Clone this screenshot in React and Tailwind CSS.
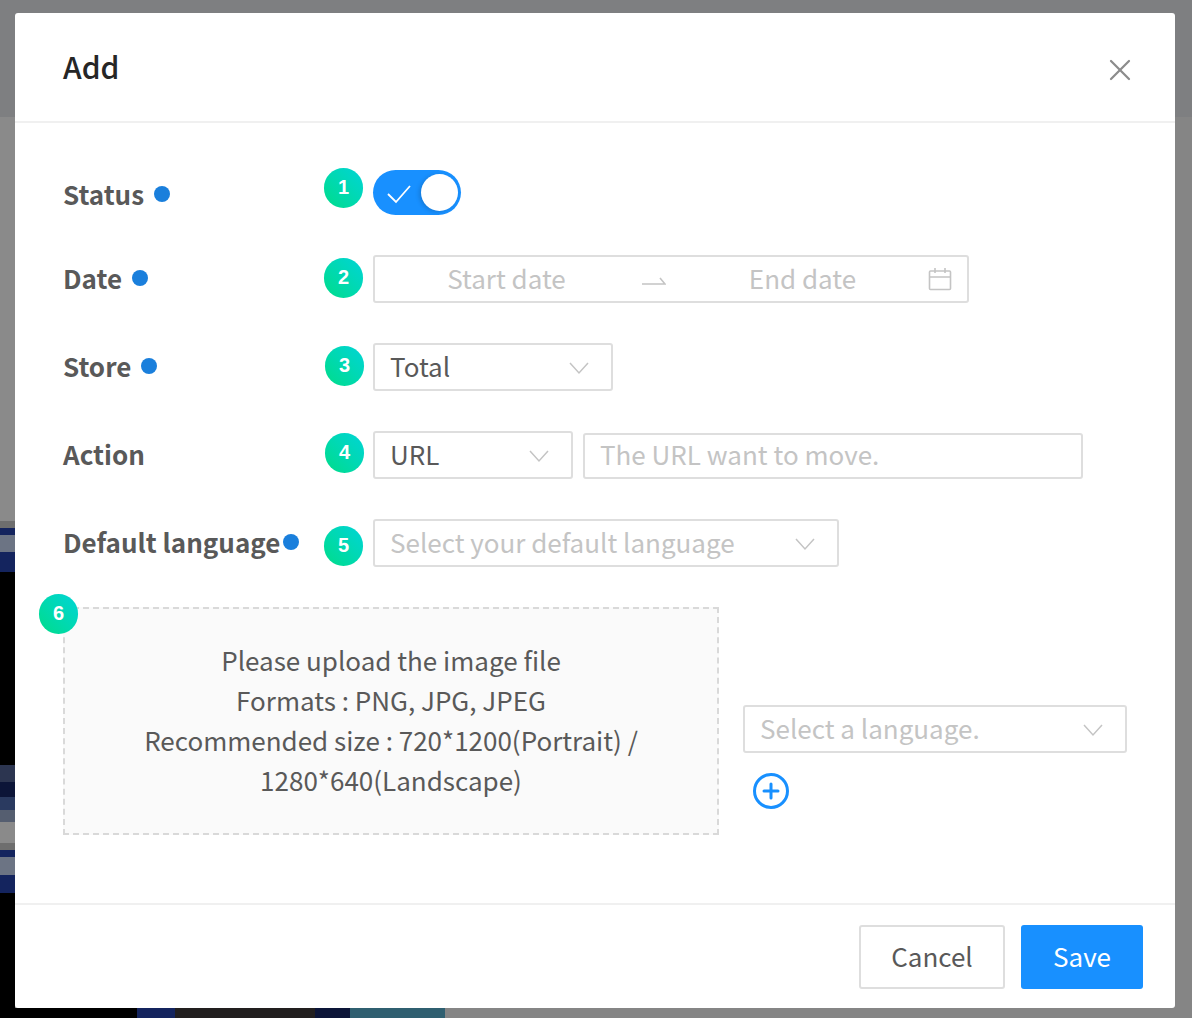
import React from 'react';
import { X, Plus } from 'lucide-react';

const Badge = ({ n, className }) => (
  <span className={`absolute flex h-10 w-[39px] items-center justify-center rounded-full bg-gradient-to-tr from-[#00dc88] to-[#00d4d6] pb-[2px] text-[20px] font-bold text-white font-['Liberation_Sans',sans-serif] ${className}`}>
    {n}
  </span>
);

const Chevron = () => (
  <svg width="20" height="14" viewBox="0 0 20 14" fill="none" stroke="#c4c4c4" strokeWidth="1.5" className="mt-[2px]">
    <path d="M1 2l9 10 9-10" />
  </svg>
);

const Select = ({ value, placeholder, className }) => (
  <div className={`flex h-12 items-center justify-between rounded-[3px] border-2 border-[#dedede] bg-white pl-[15px] pr-[22px] text-[26px] ${className}`}>
    <span className={`pb-1 ${value ? 'text-[#595959]' : 'text-[#c4c4c4]'}`}>{value || placeholder}</span>
    <Chevron />
  </div>
);

const Row = ({ label, dot, badge, badgeClass, className, labelClass = 'pb-1', children }) => (
  <div className={`relative flex items-center ${className}`}>
    <div className={`flex w-[310px] shrink-0 items-center text-[26px] font-bold text-[#595959] ${labelClass}`}>
      {label}
      {dot && <span className={`mt-[1px] h-4 w-4 rounded-full bg-[#1a7fdc] ${dot}`} />}
    </div>
    <Badge n={badge} className={badgeClass} />
    {children}
  </div>
);

export default function App() {
  return (
    <div className="relative h-[1018px] w-[1192px] overflow-hidden bg-[#858585] pl-[15px] pt-[13px] font-['Noto_Sans_CJK_KR','Noto_Sans',sans-serif]">
      {/* page behind the overlay */}
      <div className="absolute inset-0">
        <div className="h-[117px] bg-[#7e7f81]" />
        <div className="flex w-[15px] flex-col">
          <div className="h-[404px] bg-[#8a8a8a]" />
          <div className="h-[7px] bg-[#6e6e6e]" />
          <div className="h-[7px] bg-[#14245e]" />
          <div className="h-[17px] bg-[#6c7484]" />
          <div className="h-[20px] bg-[#14245e]" />
          <div className="h-[193px] bg-black" />
          <div className="h-[17px] bg-[#2c3550]" />
          <div className="h-[15px] bg-[#0c1538]" />
          <div className="h-[13px] bg-[#2a3a60]" />
          <div className="h-[12px] bg-[#555e70]" />
          <div className="h-[21px] bg-[#8a8a8a]" />
          <div className="h-[7px] bg-[#6e6e6e]" />
          <div className="h-[7px] bg-[#14245e]" />
          <div className="h-[18px] bg-[#6c7484]" />
          <div className="h-[18px] bg-[#14245e]" />
          <div className="h-[125px] bg-black" />
        </div>
      </div>
      <div className="absolute bottom-0 left-0 flex h-[10px]">
        <div className="w-[137px] bg-black" />
        <div className="w-[38px] bg-[#14245e]" />
        <div className="w-[140px] bg-[#221f1f]" />
        <div className="w-[35px] bg-[#0c1538]" />
        <div className="w-[95px] bg-[#2f5f70]" />
      </div>

      <div className="relative flex h-[995px] w-[1160px] flex-col rounded-[3px] bg-white">
        <div className="flex h-[110px] shrink-0 items-center justify-between border-b-2 border-[#f0f0f0] pl-[48px] pr-[37px]">
          <h1 className="mb-[1px] text-[30px] font-medium text-[#262626]">Add</h1>
          <X size={36} strokeWidth={1.5} className="mt-[6px] text-[#8c8c8c]" />
        </div>

        <div className="flex flex-1 flex-col pl-[48px] pt-[48px]">
          <Row label="Status" dot="ml-[10px]" labelClass="" badge="1" badgeClass="left-[261px] top-[-3px]" className="h-[44px]">
            <div className="relative mt-[-1px] h-[45px] w-[88px] rounded-full bg-[#1890ff]">
              <svg width="24" height="20" viewBox="0 0 24 20" fill="none" stroke="white" strokeWidth="1.8" className="absolute left-[14px] top-[14px]">
                <path d="M1 10l8 8L23 2" />
              </svg>
              <span className="absolute right-[3px] top-[4px] h-[37px] w-[37px] rounded-full bg-white shadow-[-2px_1px_4px_rgba(0,0,0,0.15)]" />
            </div>
          </Row>

          <Row label="Date" dot="ml-[10px]" badge="2" badgeClass="left-[261px] top-[3px]" className="mt-[40px]">
            <div className="flex h-12 w-[596px] items-center rounded-[3px] border-2 border-[#dedede] bg-white pr-[15px] text-[26px] text-[#c4c4c4]">
              <span className="w-[263px] shrink-0 pb-1 text-center">Start date</span>
              <svg width="24" height="14" viewBox="0 0 24 14" fill="none" stroke="#c4c4c4" strokeWidth="1.6" className="ml-[4px] mt-[3px] shrink-0">
                <path d="M0 10h23l-5-6" />
              </svg>
              <span className="ml-[26px] w-[221px] shrink-0 pb-1 text-center">End date</span>
              <svg width="24" height="24" viewBox="0 0 24 24" fill="none" stroke="#c4c4c4" strokeWidth="1.6" className="ml-auto shrink-0">
                <rect x="1.5" y="4" width="21" height="18.5" rx="1" />
                <path d="M1.5 10h21M7 1v5M17 1v5" />
              </svg>
            </div>
          </Row>

          <Row label="Store" dot="ml-[10px]" badge="3" badgeClass="left-[262px] top-[3px]" className="mt-[40px]">
            <Select value="Total" className="w-[240px]" />
          </Row>

          <Row label="Action" badge="4" badgeClass="left-[262px] top-[2px]" className="mt-[40px]">
            <Select value="URL" className="w-[200px]" />
            <div className="ml-[10px] mt-[1px] flex h-[46px] w-[500px] items-center rounded-[3px] border-2 border-[#dedede] bg-white pb-1 pl-[15px] text-[26px] text-[#c4c4c4]">
              The URL want to move.
            </div>
          </Row>

          <Row label="Default language" dot="ml-[3px]" badge="5" badgeClass="left-[261px] top-[7px]" className="mt-[40px]">
            <Select placeholder="Select your default language" className="w-[466px]" />
          </Row>

          <div className="relative mt-[40px] flex items-start">
            <Badge n="6" className="left-[-24px] top-[-13px]" />
            <div className="flex h-[228px] w-[656px] flex-col items-center justify-center border-2 border-dashed border-[#d9d9d9] bg-[#fafafa] pb-[2px] text-center text-[26px] leading-[40px] text-[#595959]">
              <p>Please upload the image file</p>
              <p>Formats : PNG, JPG, JPEG</p>
              <p>Recommended size : 720*1200(Portrait) /</p>
              <p>1280*640(Landscape)</p>
            </div>
            <div className="ml-[24px] mt-[98px] flex flex-col items-start">
              <Select placeholder="Select a language." className="w-[384px]" />
              <div className="ml-[10px] mt-[20px] flex h-9 w-9 items-center justify-center rounded-full border-[3px] border-[#1890ff] text-[#1890ff]">
                <Plus size={24} strokeWidth={3} />
              </div>
            </div>
          </div>
        </div>

        <div className="flex h-[105px] shrink-0 items-start justify-end gap-4 border-t-2 border-[#f0f0f0] pr-8 pt-5 text-[26px]">
          <button className="h-16 w-[146px] rounded-[3px] border-2 border-[#dedede] bg-white pb-1 text-[#595959]">Cancel</button>
          <button className="h-16 w-[122px] rounded-[3px] bg-[#1890ff] pb-1 text-white">Save</button>
        </div>
      </div>
    </div>
  );
}
